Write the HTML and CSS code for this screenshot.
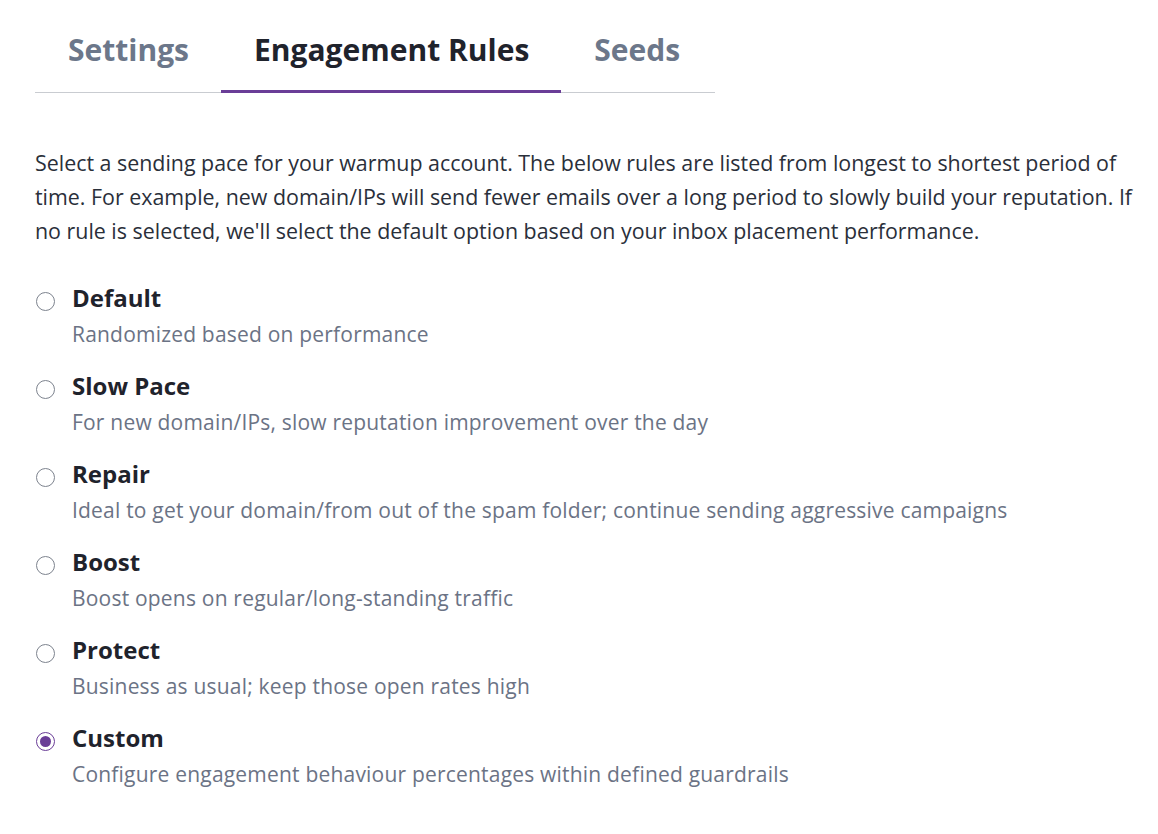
FILE: index.html
```html
<!DOCTYPE html>
<html>
<head>
<meta charset="utf-8">
<link rel="stylesheet" href="styles.css">
</head>
<body>
<div class="page">
  <nav class="tabs">
    <div class="tab">Settings</div>
    <div class="tab active">Engagement Rules</div>
    <div class="tab">Seeds</div>
  </nav>
  <p class="intro">Select a sending pace for your warmup account. The below rules are listed from longest to shortest period of time. For example, new domain/IPs will send fewer emails over a long period to slowly build your reputation. If no rule is selected, we'll select the default option based on your inbox placement performance.</p>
  <div class="options">
    <label class="option">
      <span class="radio"></span>
      <span class="text"><span class="title">Default</span><span class="desc">Randomized based on performance</span></span>
    </label>
    <label class="option">
      <span class="radio"></span>
      <span class="text"><span class="title">Slow Pace</span><span class="desc">For new domain/IPs, slow reputation improvement over the day</span></span>
    </label>
    <label class="option">
      <span class="radio"></span>
      <span class="text"><span class="title">Repair</span><span class="desc">Ideal to get your domain/from out of the spam folder; continue sending aggressive campaigns</span></span>
    </label>
    <label class="option">
      <span class="radio"></span>
      <span class="text"><span class="title">Boost</span><span class="desc">Boost opens on regular/long-standing traffic</span></span>
    </label>
    <label class="option">
      <span class="radio"></span>
      <span class="text"><span class="title">Protect</span><span class="desc">Business as usual; keep those open rates high</span></span>
    </label>
    <label class="option">
      <span class="radio checked"></span>
      <span class="text"><span class="title">Custom</span><span class="desc">Configure engagement behaviour percentages within defined guardrails</span></span>
    </label>
  </div>
</div>
</body>
</html>
```

FILE: styles.css
```css
* { box-sizing: border-box; }
html, body { margin: 0; padding: 0; background: #ffffff; }
body {
  font-family: "Open Sans", "Lato", sans-serif;
  color: #232833;
}
.page {
  padding: 0 0 0 35px;
  width: 1150px;
}
.tabs {
  display: flex;
  width: 680px;
  border-bottom: 1px solid #c9ccd1;
}
.tab {
  padding: 30px 32px 20px 33px;
  font-size: 30px;
  line-height: 40px;
  font-weight: 700;
  color: #6c778a;
  margin-bottom: -1px;
  border-bottom: 3px solid transparent;
}
.tab.active {
  color: #1f232c;
  border-bottom-color: #6a3d97;
}
.intro {
  margin: 53px 0 0 0;
  font-size: 21.4px;
  line-height: 34px;
  color: #2a2f3a;
  width: 1105px;
}
.options {
  margin-top: 35px;
  display: flex;
  flex-direction: column;
  gap: 21px;
}
.option {
  display: flex;
  align-items: flex-start;
  gap: 17px;
}
.radio {
  flex: none;
  width: 19px;
  height: 19px;
  border: 1.5px solid #7d838e;
  border-radius: 50%;
  margin-top: 9px;
  margin-left: 1px;
  position: relative;
}
.radio.checked {
  border-color: #6a3d97;
}
.radio.checked::after {
  content: "";
  position: absolute;
  left: 2.5px;
  top: 2.5px;
  width: 11px;
  height: 11px;
  border-radius: 50%;
  background: #6a3d97;
}
.text {
  display: flex;
  flex-direction: column;
}
.title {
  font-size: 24px;
  font-weight: 700;
  line-height: 30px;
  color: #1f232c;
}
.desc {
  font-size: 21px;
  letter-spacing: 0.2px;
  line-height: 32px;
  color: #6b7385;
  margin-top: 5px;
}
```
